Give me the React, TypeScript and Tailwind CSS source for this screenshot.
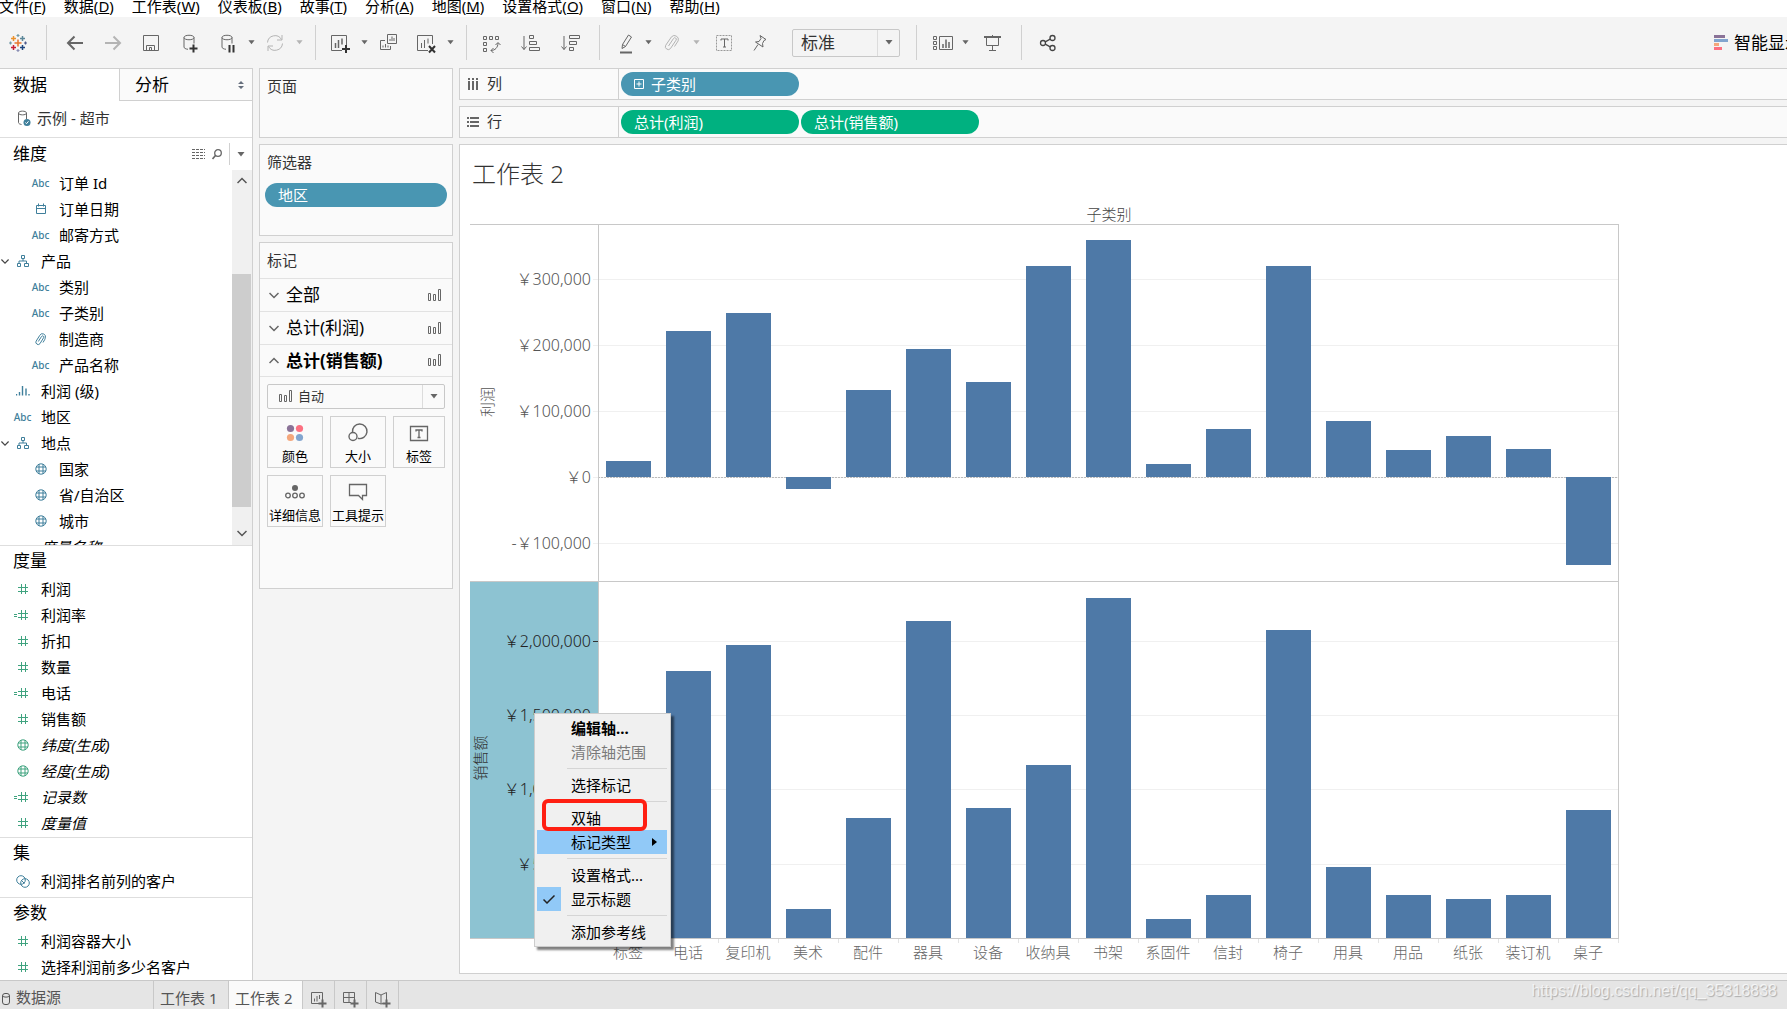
import { useState, type ReactNode } from 'react'
import clsx from 'clsx'

type IconName =
  | 'abc' | 'date' | 'tree' | 'clip' | 'hist' | 'globe' | 'num' | 'calc' | 'set' | 'none'

type Field = {
  name: string
  icon: IconName
  level?: 1 | 2
  open?: boolean
  italic?: boolean
}

const DIMENSIONS: Field[] = [
  { name: '订单 Id', icon: 'abc', level: 2 },
  { name: '订单日期', icon: 'date', level: 2 },
  { name: '邮寄方式', icon: 'abc', level: 2 },
  { name: '产品', icon: 'tree', open: true },
  { name: '类别', icon: 'abc', level: 2 },
  { name: '子类别', icon: 'abc', level: 2 },
  { name: '制造商', icon: 'clip', level: 2 },
  { name: '产品名称', icon: 'abc', level: 2 },
  { name: '利润 (级)', icon: 'hist' },
  { name: '地区', icon: 'abc' },
  { name: '地点', icon: 'tree', open: true },
  { name: '国家', icon: 'globe', level: 2 },
  { name: '省/自治区', icon: 'globe', level: 2 },
  { name: '城市', icon: 'globe', level: 2 },
  { name: '度量名称', icon: 'none', italic: true },
]

const MEASURES: Field[] = [
  { name: '利润', icon: 'num' },
  { name: '利润率', icon: 'calc' },
  { name: '折扣', icon: 'num' },
  { name: '数量', icon: 'num' },
  { name: '电话', icon: 'calc' },
  { name: '销售额', icon: 'num' },
  { name: '纬度(生成)', icon: 'globe', italic: true },
  { name: '经度(生成)', icon: 'globe', italic: true },
  { name: '记录数', icon: 'calc', italic: true },
  { name: '度量值', icon: 'num', italic: true },
]

const SETS: Field[] = [{ name: '利润排名前列的客户', icon: 'set' }]

const PARAMS: Field[] = [
  { name: '利润容器大小', icon: 'num' },
  { name: '选择利润前多少名客户', icon: 'num' },
]

const MENUS = [
  ['文件', 'F'], ['数据', 'D'], ['工作表', 'W'], ['仪表板', 'B'], ['故事', 'T'],
  ['分析', 'A'], ['地图', 'M'], ['设置格式', 'O'], ['窗口', 'N'], ['帮助', 'H'],
]

// name, profit, sales
const ROWS: [string, number, number][] = [
  ['标签', 24000, 100000],
  ['电话', 221000, 1798000],
  ['复印机', 248500, 1973000],
  ['美术', -18000, 198000],
  ['配件', 132000, 805000],
  ['器具', 194000, 2135000],
  ['设备', 144000, 876000],
  ['收纳具', 320000, 1165000],
  ['书架', 359000, 2290000],
  ['系固件', 20000, 128000],
  ['信封', 73000, 290000],
  ['椅子', 320000, 2074000],
  ['用具', 85000, 478000],
  ['用品', 41000, 290000],
  ['纸张', 62000, 263000],
  ['装订机', 43000, 290000],
  ['桌子', -133000, 862000],
]

/* ---------- icons ---------- */

function Svg({ w = 24, h = 24, className, children }: { w?: number; h?: number; className?: string; children: ReactNode }) {
  return (
    <svg width={w} height={h} viewBox={`0 0 ${w} ${h}`} fill="none" stroke="currentColor" className={clsx('shrink-0', className)} aria-hidden="true">
      {children}
    </svg>
  )
}

function FieldIcon({ icon }: { icon: IconName }) {
  if (icon === 'abc') return <span className="font-['Noto_Sans'] text-[10px] leading-none font-medium">Abc</span>
  if (icon === 'date') {
    return (
      <Svg w={12} h={12}>
        <path d="M1.500 2.500h9v8h-9zM1.500 5.500h9M3.500 .5v3M8.500 .5v3" />
      </Svg>
    )
  }
  if (icon === 'tree') {
    return (
      <Svg w={12} h={12}>
        <path d="M4.500 .5h3v3h-3zM.5 8.500h3v3h-3zM7.500 8.500h4v3h-4zM6 3.500v2.500M2 8.500v-2.500h7.500v2.500" />
      </Svg>
    )
  }
  if (icon === 'clip') {
    return (
      <Svg w={13} h={13}>
        <path d="M4.300 8.500 7.500 3.500a1.200 1.200 0 0 1 2.100 1.200L6 10.600a2.300 2.300 0 0 1-3.900-2.400L5.700 2.500a3 3 0 0 1 5.500 2.500c0 1-.8 2.200-2.200 4.500" />
      </Svg>
    )
  }
  if (icon === 'hist') {
    return (
      <Svg w={14} h={12}>
        <path d="M.5 9v1.500M3.500 7v3.500M6.500 1v9.500M10 3.500v7M13 9v1.500" strokeWidth="1.400" />
      </Svg>
    )
  }
  if (icon === 'globe') {
    return (
      <Svg w={12} h={12}>
        <circle cx="6" cy="6" r="5.200" />
        <path d="M4 1v10M8 1v10M1 4h10M1 8h10" />
      </Svg>
    )
  }
  if (icon === 'num') {
    return (
      <Svg w={12} h={12}>
        <path d="M4.500 1v10M8.500 1v10M1 4.500h10M1 8.500h10" />
      </Svg>
    )
  }
  if (icon === 'calc') {
    return (
      <Svg w={15} h={12}>
        <path d="M7.500 1v10M11.500 1v10M4 4.500h10M4 8.500h10M0 5.500h3M0 7.500h3" />
      </Svg>
    )
  }
  if (icon === 'set') {
    return (
      <Svg w={14} h={13}>
        <circle cx="5" cy="5" r="4.300" />
        <circle cx="9" cy="8" r="4.300" />
        <path d="m5.500 5.500 3 3" />
      </Svg>
    )
  }
  return null
}

function Caret({ className }: { className?: string }) {
  return (
    <svg width="8" height="5" viewBox="0 0 8 5" className={clsx('shrink-0', className)} aria-hidden="true">
      <path d="M.5 0h7L4 4.500z" fill="currentColor" />
    </svg>
  )
}

function Chevron({ up, className }: { up?: boolean; className?: string }) {
  return (
    <Svg w={10} h={7} className={className}>
      <path d={up ? 'M.5 6 5 1.500 9.500 6' : 'M.5 1 5 5.500 9.500 1'} strokeWidth="1.500" />
    </Svg>
  )
}

function BarsIcon() {
  return (
    <Svg w={14} h={13} className="text-[#666]">
      <path d="M.5 4.500h2v7h-2zM5.500 5.500h2v6h-2zM10.500 .5h2v11h-2z" />
    </Svg>
  )
}

function Logo() {
  const plus = (x: number, y: number, r: number, c: string) => (
    <path key={`${x}-${y}`} d={`M${x - r} ${y}h${r * 2}M${x} ${y - r}v${r * 2}`} stroke={c} strokeWidth={r > 2 ? 1.5 : 1.2} />
  )
  return (
    <Svg>
      {plus(12, 12, 3.5, '#e8762c')}
      {plus(7.5, 7.5, 2.500, '#eb912c')}
      {plus(16.500, 7.500, 2.500, '#5c8799')}
      {plus(7.500, 16.500, 2.500, '#c72035')}
      {plus(16.500, 16.500, 2.500, '#1f447e')}
      {plus(12, 4.500, 1.500, '#7199a6')}
      {plus(12, 19.500, 1.500, '#8b8fb5')}
      {plus(4.500, 12, 1.500, '#7199a6')}
      {plus(19.500, 12, 1.500, '#4e5b8c')}
    </Svg>
  )
}

const DB = 'M7 6.500c0-3 10-3 10 0s-10 3-10 0v9.500c0 1.200 1.500 2 4 2.300M17 6.500v6'

/* ---------- toolbar ---------- */

function Tool({ label, className, children }: { label: string; className?: string; children: ReactNode }) {
  return (
    <button aria-label={label} className={clsx('flex h-6 w-6 shrink-0 items-center justify-center', className)}>
      <Svg>{children}</Svg>
    </button>
  )
}

function Drop({ label, className }: { label: string; className?: string }) {
  return (
    <button aria-label={label} className={clsx('flex h-6 w-3 shrink-0 items-center justify-center', className)}>
      <Caret className="w-[7px]" />
    </button>
  )
}

function Divider({ className }: { className?: string }) {
  return <span className={clsx('h-[35px] w-px shrink-0 bg-[#d0d0d0]', className)} />
}

function Toolbar() {
  return (
    <div className="flex h-[51px] shrink-0 items-center overflow-hidden pl-1.5 text-[#666]">
      <button aria-label="开始页面"><Logo /></button>
      <Divider className="ml-4" />
      <Tool label="撤消" className="ml-4"><path d="M20 12H5M11.500 5.500 5 12l6.500 6.500" strokeWidth="2" /></Tool>
      <Tool label="重做" className="ml-3.5 text-[#b4b4b4]"><path d="M4 12h15M12.500 5.500 19 12l-6.500 6.500" strokeWidth="2" /></Tool>
      <Tool label="保存" className="ml-3.5"><path d="M4.500 4.500h15v15h-15zM7.500 19.500v-5h8v5M10.500 19v-2.500h2v2.500" /></Tool>
      <Tool label="新建数据源" className="ml-3.5">
        <path d={DB} />
        <path d="M16.500 13.500v8M12.500 17.500h8" stroke="#333" strokeWidth="2" />
      </Tool>
      <Tool label="暂停自动更新" className="ml-3.5">
        <path d={DB} />
        <path d="M14.500 14v7.500M18.500 14v7.500" stroke="#333" strokeWidth="2" />
      </Tool>
      <Drop label="更新选项" className="ml-1.5" />
      <Tool label="运行更新" className="ml-1.5 text-[#b4b4b4]">
        <path d="M4.500 11.500a7.500 7.500 0 0 1 14-3M19.500 12.500a7.500 7.500 0 0 1-14 3M19 4v5h-5M5 20v-5h5" />
      </Tool>
      <Drop label="运行选项" className="ml-1.5 text-[#b4b4b4]" />
      <Divider className="ml-2.5" />
      <Tool label="新建工作表" className="ml-3">
        <path d="M14 19.500H3.500v-15h15V14" />
        <path d="M7.500 12v5M10.500 9v8M14 7.500v6" strokeWidth="1.500" />
        <path d="M18 14v8M14 18h8" stroke="#333" strokeWidth="2" />
      </Tool>
      <Drop label="新建选项" className="ml-1.5" />
      <Tool label="复制" className="ml-1.5">
        <path d="M11.500 3.500h9v9h-9zM9 9.500H4.500v9h10V15M14 10V8M16 10V5.500M18 10V7M7 16.500v-2M9.500 16.500v-3.500M12 16.500v-2" />
      </Tool>
      <Tool label="清除工作表" className="ml-3.5">
        <path d="M14 19.500H3.500v-15h15V13M7.500 12v5M10.500 9v8M14 7.500v5" />
        <path d="m15 15 6 6.500M21 15l-6 6.500" stroke="#333" strokeWidth="2" />
      </Tool>
      <Drop label="清除选项" className="ml-1.5" />
      <Divider className="ml-2.5" />
      <Tool label="交换行和列" className="ml-3">
        <path d="M4.500 5.500h3v3h-3zM10.500 5.500h3v3h-3zM16.500 5.500h3v3h-3zM4.500 11.500h3v3h-3zM4.500 17.500h3v3h-3zM12 19.500c4 0 7-3 7-7.500M16.500 14l2.500-2.500 2.500 2.500M14.500 17 12 19.500l2.500 2.500" />
      </Tool>
      <Tool label="升序排序" className="ml-4">
        <path d="M5 5v13.500M2.500 15.500 5 18.500l2.500-3M10.500 4.500h4v3h-4zM10.500 10.500h7v3h-7zM10.500 16.500h10v3h-10z" />
      </Tool>
      <Tool label="降序排序" className="ml-4">
        <path d="M5 5v13.500M2.500 15.500 5 18.500l2.500-3M10.500 4.500h10v3h-10zM10.500 10.500h7v3h-7zM10.500 16.500h4v3h-4z" />
      </Tool>
      <Divider className="ml-4" />
      <Tool label="突出显示" className="ml-3.5">
        <path d="M6 21.500h12" strokeWidth="2" />
        <path d="m8.500 13.500 6-9.500 3 2-6 9.500-3.500 2zM8.500 13.500l3 2" />
      </Tool>
      <Drop label="突出显示选项" className="ml-1" />
      <Tool label="组成员" className="ml-1.5 text-[#b4b4b4]">
        <path d="M8.500 15 13.500 7.500a1.500 1.500 0 0 1 2.600 1.600L10.500 17.500a2.900 2.900 0 0 1-4.800-3.200l5.800-8.500a4 4 0 0 1 6.700 4L14.500 15.500" />
      </Tool>
      <Drop label="组选项" className="ml-1.5 text-[#b4b4b4]" />
      <Tool label="显示标记标签" className="ml-2.5">
        <path d="M4.500 4.500h15v15h-15z" strokeDasharray="2 1" stroke="#999" />
        <path d="M9 9.500v-1.500h7v1.500M12.500 8v8M11 16h3" />
      </Tool>
      <Tool label="固定轴" className="ml-3">
        <path d="m12 4.500 6 4-2 1-1.500 3 .5 3.500-7.500-5 3.500-.5 2-3zM10 13.500l-4 6" />
      </Tool>
      <div className="relative ml-5 h-7 w-[108px] shrink-0">
        <select aria-label="适合" className="h-full w-full appearance-none rounded-xs border border-[#c8c8c8] pl-2 text-[17px] leading-6 text-[#333]">
          <option>标准</option>
          <option>适合宽度</option>
          <option>适合高度</option>
          <option>整个视图</option>
        </select>
        <span className="pointer-events-none absolute inset-y-px right-px flex w-[22px] items-center justify-center border-l border-[#dcdcdc]">
          <Caret />
        </span>
      </div>
      <Divider className="ml-4" />
      <Tool label="显示/隐藏卡" className="ml-3.5">
        <path d="M2.500 5.500h3v3h-3zM2.500 10.500h3v3h-3zM2.500 15.500h3v3h-3zM8.500 5.500h13v13h-13z" />
        <path d="M12 13v4M15 8.500V17M18 11v6" strokeWidth="1.500" />
      </Tool>
      <Drop label="卡选项" className="ml-1" />
      <Tool label="演示模式" className="ml-2.5">
        <path d="M3 6h17" strokeWidth="2" />
        <path d="M5.500 6v8.500h12V6M11.500 4v1M11.500 14.500v5M8 19.500h7" />
      </Tool>
      <Divider className="ml-4" />
      <Tool label="共享" className="ml-3.5 text-[#444]">
        <g strokeWidth="1.300">
          <circle cx="7" cy="12" r="2.500" />
          <circle cx="16.500" cy="7" r="2.500" />
          <circle cx="16.500" cy="17" r="2.500" />
          <path d="m9.200 10.800 5-2.600M9.200 13.200l5 2.600" />
        </g>
      </Tool>
      <button className="-mr-[15px] ml-auto flex shrink-0 items-center gap-1.5 text-[17px] text-black">
        <svg width="14" height="16" viewBox="0 0 14 16" aria-hidden="true">
          <path d="M0 0h11v3H0z" fill="#8a7297" />
          <path d="M0 4h14v3H0z" fill="#82a5cf" />
          <path d="M0 8h5v3H0z" fill="#f4a77c" />
          <path d="M0 12h8v3H0z" fill="#fc7081" />
        </svg>
        智能显示
      </button>
    </div>
  )
}

/* ---------- data pane ---------- */

function FieldRow({ field, green }: { field: Field; green?: boolean }) {
  const deep = field.level === 2
  const narrow = ['calc', 'num', 'globe', 'tree'].includes(field.icon)
  return (
    <li className="flex h-[26px] items-center">
      <span className="flex w-[14px] shrink-0 pl-px text-[#444]">{field.open && <Chevron className="w-2" />}</span>
      <span
        className={clsx(
          'flex shrink-0 items-center',
          deep && 'w-[45px] justify-center pl-2',
          !deep && 'w-[27px]',
          !deep && (narrow ? 'justify-end pr-3' : 'justify-center pr-2.5'),
          green ? 'text-[#3fa37f]' : 'text-[#3f7f9b]'
        )}
      >
        <FieldIcon icon={field.icon} />
      </span>
      <button className={clsx('whitespace-nowrap', field.italic && 'italic')}>{field.name}</button>
    </li>
  )
}

function Section({ title, fields, className }: { title: string; fields: Field[]; className?: string }) {
  return (
    <section className={clsx('border-t border-[#dedede]', className)}>
      <h2 className="h-[30px] pl-[13px] text-[17px] leading-[30px]">{title}</h2>
      <ul>
        {fields.map(f => <FieldRow key={f.name} field={f} green={f.icon !== 'set'} />)}
      </ul>
    </section>
  )
}

function DataPane() {
  const [tab, setTab] = useState<'data' | 'analytics'>('data')
  return (
    <aside className="flex w-[253px] shrink-0 flex-col overflow-hidden border-t border-r border-[#d0d0d0] bg-white text-[15px] text-black">
      <div className="flex h-8 shrink-0 text-[17px]">
        <button onClick={() => setTab('data')} className={clsx('w-[119px] pl-[13px] text-left', tab !== 'data' && 'border-b border-[#d0d0d0] bg-[#fafafa]')}>数据</button>
        <button onClick={() => setTab('analytics')} className={clsx('flex flex-1 items-center justify-between border-l border-[#d0d0d0] pr-2 pl-[15px]', tab !== 'analytics' && 'border-b bg-[#fafafa]')}>
          分析
          <svg width="6" height="8" viewBox="0 0 6 8" aria-hidden="true"><path d="M3 0l3 3H0zM3 8 0 5h6z" fill="#666f7d" /></svg>
        </button>
      </div>
      <button className="flex h-9 shrink-0 items-center gap-1.5 pb-0.5 pl-[17px] text-[#333]">
        <Svg w={14} h={17} className="text-[#666]">
          <path d="M1.500 3c0-2.500 8-2.500 8 0s-8 2.500-8 0v9.500c0 1 1 1.600 3 2M9.500 3v6" />
          <circle cx="10" cy="12.500" r="3.500" fill="#3f7f9b" stroke="none" />
          <path d="m8.500 12.500 1 1.200 2-2.400" stroke="#fff" />
        </Svg>
        示例 - 超市
      </button>

      <div className="flex h-[33px] shrink-0 items-center border-t border-[#dedede] pl-[13px] text-[#666]">
        <h2 className="flex-1 text-[17px] text-black">维度</h2>
        <button aria-label="查看数据">
          <Svg w={13} h={10}><path d="M0 .5h13M0 3.500h13M0 6.500h13M0 9.500h13" strokeDasharray="3 1" /></Svg>
        </button>
        <button aria-label="查找字段" className="ml-[7px]">
          <Svg w={10} h={11}><circle cx="6" cy="4" r="3.300" strokeWidth="1.300" /><path d="M3.500 6.500.5 10" strokeWidth="1.600" /></Svg>
        </button>
        <span className="ml-[7px] h-[22px] w-px bg-[#d0d0d0]" />
        <button aria-label="维度菜单" className="flex w-[22px] justify-center"><Caret /></button>
      </div>
      <div className="flex min-h-0 flex-1 overflow-hidden">
        <ul className="flex-1">
          {DIMENSIONS.map(f => <FieldRow key={f.name} field={f} />)}
        </ul>
        <div className="flex w-5 flex-col items-center justify-between bg-[#f0f0f0] pr-px text-[#555]">
          <button aria-label="向上滚动" className="flex h-5 items-center"><Chevron up /></button>
          <div className="mt-[84px] mb-[18px] w-full flex-1 bg-[#cdcdcd]" />
          <button aria-label="向下滚动" className="flex h-5 items-center pb-1"><Chevron /></button>
        </div>
      </div>

      <Section title="度量" fields={MEASURES} className="pb-px" />
      <Section title="集" fields={SETS} className="pb-[3px]" />
      <Section title="参数" fields={PARAMS} />
    </aside>
  )
}

/* ---------- cards ---------- */

const CARD = 'border border-[#d0d0d0] bg-[#fafafa]'

function MarksRow({ name, open }: { name: string; open?: boolean }) {
  return (
    <button className={clsx('flex items-center border-t border-[#e2e2e2] pr-2.5 pl-[9px] text-[17px] text-black', open ? 'h-8 font-bold' : 'h-[33px]')}>
      <Chevron up={open} className="text-[#666]" />
      <span className="ml-[7px] flex-1 text-left">{name}</span>
      <BarsIcon />
    </button>
  )
}

function MarkButton({ label, children }: { label: string; children: ReactNode }) {
  return (
    <button className="flex h-[52px] flex-col items-center justify-between border border-[#d0d0d0] pt-1 pb-px text-[13px] leading-5 whitespace-nowrap text-black">
      <Svg className="text-[#666]">{children}</Svg>
      {label}
    </button>
  )
}

function Cards() {
  return (
    <div className="flex w-[194px] shrink-0 flex-col gap-1.5 text-[15px] text-[#333]">
      <section className={clsx(CARD, 'h-[70px] px-[7px] pt-[5px]')}>
        <h3 className="leading-6">页面</h3>
      </section>
      <section className={clsx(CARD, 'h-[92px] px-[5px] pt-[5px]')}>
        <h3 className="pl-0.5 leading-6">筛选器</h3>
        <button className="mt-[9px] h-6 w-full rounded-full bg-[#4996b2] pl-[13px] text-left leading-6 text-white">地区</button>
      </section>
      <section className={clsx(CARD, 'flex h-[347px] flex-col')}>
        <h3 className="h-[35px] px-[7px] leading-[35px]">标记</h3>
        <MarksRow name="全部" />
        <MarksRow name="总计(利润)" />
        <MarksRow name="总计(销售额)" open />
        <div className="flex flex-col gap-[7px] border-t border-[#e2e2e2] p-[7px]">
          <div className="relative h-[25px]">
            <select aria-label="标记类型" className="h-full w-full appearance-none rounded-xs border border-[#c8c8c8] pl-[30px] text-[13px] text-[#333]">
              <option>自动</option>
              <option>条形图</option>
              <option>线</option>
            </select>
            <span className="pointer-events-none absolute top-[6px] left-[12px]"><BarsIcon /></span>
            <span className="pointer-events-none absolute inset-y-px right-px flex w-[22px] items-center justify-center border-l border-[#dcdcdc] text-[#666]">
              <Caret />
            </span>
          </div>
          <div className="grid grid-cols-[56px_56px_52px] gap-[7px]">
            <MarkButton label="颜色">
              <g stroke="none">
                <circle cx="7.500" cy="7.500" r="3.600" fill="#8a7297" />
                <circle cx="16.500" cy="7.500" r="3.600" fill="#fc7081" />
                <circle cx="7.500" cy="16.500" r="3.600" fill="#f4a77c" />
                <circle cx="16.500" cy="16.500" r="3.600" fill="#82a5cf" />
              </g>
            </MarkButton>
            <MarkButton label="大小">
              <path d="M6.500 11.300a7.300 7.300 0 1 1 5.300 6" strokeWidth="1.400" />
              <circle cx="7" cy="15.500" r="4" strokeWidth="1.400" />
            </MarkButton>
            <MarkButton label="标签">
              <path d="M3.500 5.500h17v14h-17z" strokeWidth="1.300" />
              <path d="M9 10.500V9h6v1.500M12 9v7.500M10.500 16.500h3" strokeWidth="1.300" />
            </MarkButton>
            <MarkButton label="详细信息">
              <circle cx="12" cy="8" r="3" fill="currentColor" stroke="none" />
              <circle cx="5" cy="15.500" r="2.300" strokeWidth="1.300" />
              <circle cx="12" cy="15.500" r="2.300" strokeWidth="1.300" />
              <circle cx="19" cy="15.500" r="2.300" strokeWidth="1.300" />
            </MarkButton>
            <MarkButton label="工具提示">
              <path d="M3.500 4.500h17v11h-4v4l-4-4h-9z" strokeWidth="1.300" />
            </MarkButton>
          </div>
        </div>
      </section>
    </div>
  )
}

/* ---------- shelves ---------- */

function Shelf({ label, icon, children }: { label: string; icon: ReactNode; children: ReactNode }) {
  return (
    <div className="flex h-8 shrink-0 border-y border-l border-[#d0d0d0] bg-[#fafafa] text-[15px]">
      <div className="flex w-[159px] items-center gap-2 border-r border-[#d0d0d0] pb-px pl-[7px] text-[#333]">
        {icon}
        {label}
      </div>
      <div className="flex items-center gap-0.5 pl-0.5">{children}</div>
    </div>
  )
}

function Pill({ color, children }: { color: string; children: ReactNode }) {
  return (
    <button className={clsx('flex h-6 w-[178px] items-center gap-[7px] rounded-full pl-[13px] text-[15px] text-white', color)}>
      {children}
    </button>
  )
}

/* ---------- chart ---------- */

const AXIS = 128
const CELL = 60
const BAR = 45
const TOP = 24
const MID = 381
const BOTTOM = 738
const RIGHT = AXIS + CELL * ROWS.length
const ZERO = 277

const profitY = (v: number) => ZERO - Math.round((v / 100000) * 66)
const salesY = (v: number) => BOTTOM - Math.round((v / 1000000) * 148.5)
const money = (v: number) => `${v < 0 ? '-' : ''}￥${Math.abs(v).toLocaleString('en-US')}`

function Chart() {
  return (
    <svg width={RIGHT + 1} height="770" className="block text-[15px] font-light" shapeRendering="crispEdges" role="img" aria-label="子类别 利润 销售额">
      <text x={(AXIS + RIGHT) / 2 + 1} y="20" textAnchor="middle" fill="#444">子类别</text>

      <rect x="0" y={MID + 1} width={AXIS} height={BOTTOM - MID - 1} fill="#8dc3d2" />

      {[300000, 200000, 100000, 0, -100000].map(v => (
        <g key={v}>
          <line x1={AXIS - 5} x2={RIGHT} y1={profitY(v) + 0.5} y2={profitY(v) + 0.5} stroke="#f0f0f0" />
          <text x={AXIS - 7} y={profitY(v) + 6} textAnchor="end" fill="#555" className="text-base">{money(v)}</text>
        </g>
      ))}
      {[2000000, 1500000, 1000000, 500000].map(v => (
        <g key={v}>
          <line x1={AXIS} x2={RIGHT} y1={salesY(v) + 0.5} y2={salesY(v) + 0.5} stroke="#f0f0f0" />
          <line x1={AXIS - 5} x2={AXIS} y1={salesY(v) + 0.5} y2={salesY(v) + 0.5} stroke="#333" />
          <text x={AXIS - 7} y={salesY(v) + 6} textAnchor="end" fill="#222" className="text-base">{money(v)}</text>
        </g>
      ))}
      <line x1={AXIS} x2={RIGHT} y1={ZERO + 0.5} y2={ZERO + 0.5} stroke="#bbb" strokeDasharray="2 1" />

      {ROWS.map(([name, profit, sales], i) => {
        const x = AXIS + i * CELL + 8
        const py = profitY(profit)
        return (
          <g key={name}>
            <rect x={x} y={Math.min(py, ZERO)} width={BAR} height={Math.abs(py - ZERO)} fill="#4e79a7" />
            <rect x={x} y={salesY(sales)} width={BAR} height={BOTTOM - salesY(sales)} fill="#4e79a7" />
            <line x1={x + 52.5} x2={x + 52.5} y1={BOTTOM} y2={BOTTOM + 5} stroke="#e4e4e4" />
            <text x={x + 22} y={BOTTOM + 20} textAnchor="middle" fill="#666">{name}</text>
          </g>
        )
      })}

      <g stroke="#c8c8c8">
        <path d={`M0 ${TOP + 0.5}H${RIGHT}M0 ${MID + 0.5}H${RIGHT}M0 ${BOTTOM + 0.5}H${RIGHT + 1}`} />
        <path d={`M${AXIS + 0.5} ${TOP}V${BOTTOM}M${RIGHT + 0.5} ${TOP}V${BOTTOM}`} />
      </g>

      <text transform="translate(23 202) rotate(-90)" textAnchor="middle" fill="#555">利润</text>
      <text transform="translate(16 558) rotate(-90)" textAnchor="middle" fill="#333">销售额</text>
    </svg>
  )
}

/* ---------- axis context menu ---------- */

function MenuItem({ label, bold, disabled, active, checked }: { label: string; bold?: boolean; disabled?: boolean; active?: boolean; checked?: boolean }) {
  return (
    <button role="menuitem" disabled={disabled} className={clsx('flex h-6 w-full items-center', bold && 'font-bold', disabled && 'text-[#7a7a7a]', active && 'bg-[#91c9f7]')}>
      <span className={clsx('mr-2.5 flex h-6 w-6 items-center justify-center', checked && 'bg-[#91c9f7]')}>
        {checked && <Svg w={12} h={9}><path d="m.5 4.500 3.500 3.500 7.500-7.500" stroke="#222" strokeWidth="1.500" /></Svg>}
      </span>
      <span className="flex-1 text-left whitespace-nowrap">{label}</span>
      {active && <svg width="5" height="8" viewBox="0 0 5 8" className="mr-2.5" aria-hidden="true"><path d="M0 0l5 4-5 4z" /></svg>}
    </button>
  )
}

function MenuLine() {
  return <div className="flex h-[9px] items-center pl-[30px]"><span className="h-px w-full bg-[#d5d5d5]" /></div>
}

function AxisMenu() {
  return (
    <div role="menu" className="absolute top-[568px] left-[74px] w-[137px] border border-[#ccc] bg-[#f0f0f0] py-0.5 pr-[3px] pl-0.5 text-[15px] text-black shadow-[3px_3px_2px_rgba(0,0,0,0.5)]">
      <MenuItem label="编辑轴..." bold />
      <MenuItem label="清除轴范围" disabled />
      <MenuLine />
      <MenuItem label="选择标记" />
      <MenuLine />
      <MenuItem label="双轴" />
      <MenuItem label="标记类型" active />
      <MenuLine />
      <MenuItem label="设置格式..." />
      <MenuItem label="显示标题" checked />
      <MenuLine />
      <MenuItem label="添加参考线" />
      <span className="pointer-events-none absolute top-[85px] left-[7px] h-8 w-[105px] rounded-md border-4 border-[#ff1f12]" />
    </div>
  )
}

/* ---------- sheet tabs ---------- */

function SheetTabs() {
  const add = 'flex w-8 justify-center border-r border-[#c8c8c8] pt-[11px] text-[#666]'
  const tab = 'border-r border-[#c8c8c8] pt-1.5 pl-1.5 text-left whitespace-nowrap'
  return (
    <footer className="relative flex h-[29px] shrink-0 items-stretch overflow-hidden border-t border-[#c8c8c8] bg-[#e5e5e5] text-[15px] leading-5 text-[#555]">
      <button className="flex w-[154px] gap-1.5 border-r border-[#c8c8c8] pt-1.5 pl-0.5">
        <Svg w={8} h={12} className="mt-1.5"><rect x=".5" y=".5" width="7" height="11" rx="2.500" /><path d="M.5 3c1 1.500 6 1.500 7 0" /></Svg>
        数据源
      </button>
      <button className={clsx(tab, 'w-[75px]')}>工作表 1</button>
      <button className={clsx(tab, 'w-[74px] bg-[#fafafa]')}>工作表 2</button>
      <button aria-label="新建工作表" className={add}>
        <Svg w={16} h={16}>
          <path d="M8 11.500H.5V.5h11V8M3.500 6.500v3M6 4v5.500M8.500 3v4" /><path d="M11.500 7.500v8M7.500 11.500h8" strokeWidth="2" />
        </Svg>
      </button>
      <button aria-label="新建仪表板" className={add}>
        <Svg w={16} h={16}>
          <path d="M8 10.500H.5V.5h11V8M.5 5.500h11M6 .5v10" /><path d="M11.500 7.500v8M7.500 11.500h8" strokeWidth="2" />
        </Svg>
      </button>
      <button aria-label="新建故事" className={add}>
        <Svg w={16} h={16}>
          <path d="M8 11.500 6 12 .5 10V.5L6 3l5.500-2.500V8M6 3v9" /><path d="M11.500 7.500v8M7.500 11.500h8" strokeWidth="2" />
        </Svg>
      </button>
      <span className="absolute -top-0.5 right-2.5 font-['Liberation_Sans'] text-base text-white/70 [text-shadow:1px_1px_1px_rgba(0,0,0,0.25)]">
        https://blog.csdn.net/qq_35318838
      </span>
    </footer>
  )
}

export default function App() {
  return (
    <div className="flex h-screen flex-col overflow-hidden bg-[#f4f4f4] font-['Noto_Sans','Noto_Sans_CJK_SC',sans-serif]">
      <nav className="-ml-px flex h-[17px] shrink-0 gap-[18px] overflow-hidden bg-white text-[15px] leading-3 text-black">
        {MENUS.map(([name, key]) => (
          <button key={key} className="h-3 whitespace-nowrap">
            {name}(<u>{key}</u>)
          </button>
        ))}
      </nav>
      <Toolbar />
      <div className="flex min-h-0 flex-1 gap-1.5">
        <DataPane />
        <Cards />
        <main className="flex min-w-0 flex-1 flex-col gap-1.5 pb-1.5">
          <Shelf label="列" icon={<Svg w={12} h={12} className="text-[#666]"><path d="M2 0v2M2 3v9M6 0v2M6 3v9M10 0v2M10 3v9" strokeWidth="2" /></Svg>}>
            <Pill color="bg-[#4996b2]">
              <Svg w={10} h={10}><path d="M.5 .5h9v9h-9zM2.500 5h5M5 2.500v5" /></Svg>
              子类别
            </Pill>
          </Shelf>
          <Shelf label="行" icon={<Svg w={12} h={12} className="text-[#666]"><path d="M0 2h2M3 2h9M0 6h2M3 6h9M0 10h2M3 10h9" strokeWidth="2" /></Svg>}>
            <Pill color="bg-[#00b180]">总计(利润)</Pill>
            <Pill color="bg-[#00b180]">总计(销售额)</Pill>
          </Shelf>
          <section className="relative min-h-0 flex-1 overflow-hidden border-y border-l border-[#d0d0d0] bg-white pl-2.5">
            <h1 className="h-[55px] pl-0.5 text-2xl leading-[58px] font-light text-[#333]">工作表 2</h1>
            <Chart />
            <AxisMenu />
          </section>
        </main>
      </div>
      <SheetTabs />
    </div>
  )
}
